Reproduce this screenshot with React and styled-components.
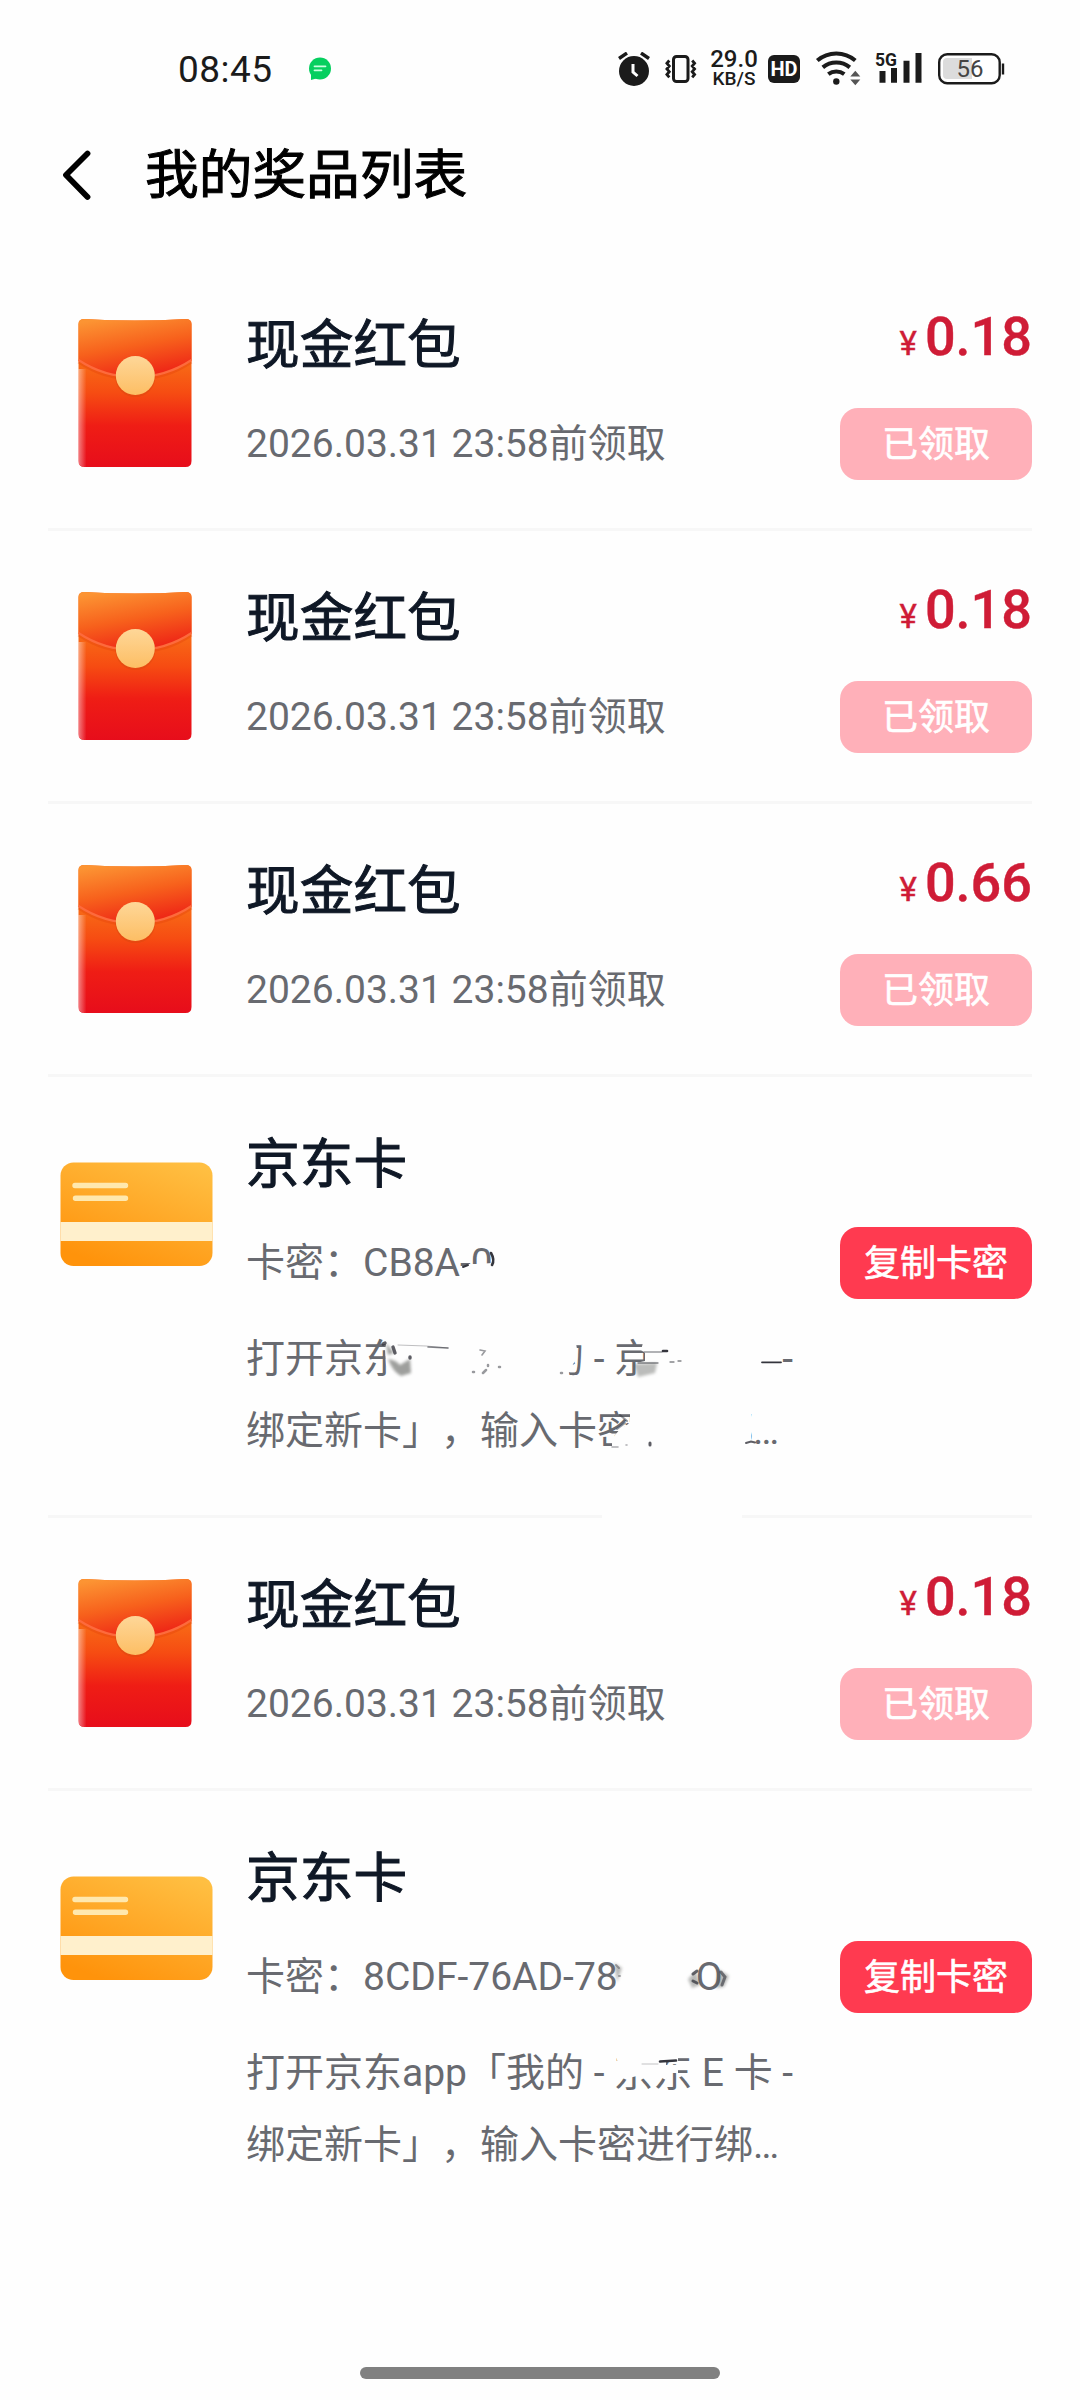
import React from 'react';
import styled, { createGlobalStyle } from 'styled-components';

const GlobalStyle = createGlobalStyle`
  * {
    box-sizing: border-box;
  }
  body {
    margin: 0;
    background: #fefefe;
    font-family: Roboto, "Noto Sans CJK SC", sans-serif;
    text-spacing-trim: space-all;
  }
`;

const Page = styled.div`
  width: 1080px;
  height: 2400px;
  display: flex;
  flex-direction: column;
  overflow: hidden;
`;

const StatusBar = styled.div`
  height: 120px;
  padding: 18px 75px 0 178px;
  display: flex;
  align-items: center;
  flex: none;
  color: #1b1b1b;
`;

const Clock = styled.div`
  font-size: 37px;
  letter-spacing: 0.5px;
  margin-right: 35px;
`;

const StatusIcons = styled.div`
  display: flex;
  align-items: center;
  gap: 14px;
  margin-left: auto;
`;

const NetSpeed = styled.div`
  width: 50px;
  margin: 0 -5px 0 -3px;
  display: flex;
  flex-direction: column;
  align-items: center;
  font-weight: 500;
`;

const NetValue = styled.div`
  font-size: 24px;
  line-height: 19px;
`;

const NetUnit = styled.div`
  font-size: 19px;
  line-height: 19px;
`;

const HdBadge = styled.div`
  width: 32px;
  height: 28px;
  border-radius: 6px;
  background: #1b1b1b;
  color: #fff;
  font-size: 20px;
  font-weight: 700;
  line-height: 29px;
  text-align: center;
`;

const Header = styled.div`
  height: 138px;
  padding: 0 60px 28px;
  display: flex;
  align-items: center;
  flex: none;
`;

const HeaderTitle = styled.div`
  margin-left: 53px;
  padding-top: 1px;
  font-size: 53.7px;
  line-height: 80px;
  color: #000;
  -webkit-text-stroke: 1px #000;
`;

const List = styled.div`
  padding: 0 48px;
`;

const Item = styled.div`
  position: relative;
  height: ${(props) => (props.$tall ? 441 : 273)}px;
  display: flex;
  border-bottom: ${(props) => (props.$last ? 0 : 3)}px solid #f7f7f7;
`;

const Picture = styled.div`
  width: 198px;
  flex: none;
  padding: ${(props) => (props.$card ? '82px 0 0 9px' : '57px 0 0 27px')};
`;

const Info = styled.div`
  flex: 1;
  padding-top: 48px;
`;

const Title = styled.div`
  font-size: 53.7px;
  line-height: 80px;
  color: #0f1826;
  -webkit-text-stroke: 1px #0f1826;
`;

const Line = styled.div`
  font-size: 39px;
  line-height: 58px;
  color: #686a70;
  margin-top: 29px;
  white-space: pre;
`;

const Tail = styled.span`
  margin-left: 78px;
`;

const Desc = styled.div`
  font-size: 39px;
  line-height: 72px;
  color: #686a70;
  margin-top: 31px;
  white-space: pre;
`;

const Side = styled.div`
  display: flex;
  flex-direction: column;
  align-items: flex-end;
  padding-top: ${(props) => (props.$card ? 150 : 47)}px;
`;

const Price = styled.div`
  height: 64px;
  margin-bottom: 39px;
  font-size: 54px;
  line-height: 64px;
  font-weight: 500;
  color: #cf1c36;
  -webkit-text-stroke: 0.4px #cf1c36;
`;

const Yuan = styled.span`
  font-size: 33px;
  font-weight: 400;
  margin-right: 8px;
`;

const Button = styled.div`
  width: 192px;
  height: 72px;
  border-radius: 18px;
  background: ${(props) => (props.$done ? '#ffb0b9' : '#ff3a50')};
  color: #fff;
  font-size: 36px;
  line-height: 74px;
  text-align: center;
  -webkit-text-stroke: 0.6px #fff;
`;

const Smudge = styled.svg`
  position: absolute;
  left: 198px;
  top: 0;
`;

const Stain = styled.g`
  filter: blur(1.5px);
`;

const HomeBar = styled.div`
  width: 360px;
  height: 12px;
  border-radius: 6px;
  background: #808080;
  margin: auto auto 21px;
`;

const MessageIcon = () => (
  <svg width="24" height="24" viewBox="0 0 24 24">
    <circle cx="12" cy="11.5" r="11" fill="#06cf5f" />
    <path d="M3 15v8l7-2z" fill="#06cf5f" />
    <path d="M6.500 9.300h11M6.500 13.300h7" stroke="#c8ffdf" strokeWidth="1.800" strokeLinecap="round" />
  </svg>
);

const AlarmIcon = () => (
  <svg width="32" height="34" viewBox="0 0 32 34">
    <circle cx="16" cy="19" r="15" fill="#1b1b1b" />
    <path d="M1 6.500l8-5.500M31 6.500L23 1" stroke="#1b1b1b" strokeWidth="3.400" />
    <path d="M15 12v8l4.500 4" stroke="#fff" strokeWidth="3" fill="none" />
  </svg>
);

const VibrateIcon = () => (
  <svg width="34" height="30" viewBox="-1 0 34 30">
    <rect x="8.500" y="2.500" width="14.500" height="25" rx="3" fill="none" stroke="#1b1b1b" strokeWidth="3" />
    <path
      d="M4.300 6.500l-2.400 2.800 2.400 2.800-2.400 2.800 2.400 2.800-2.400 2.800 2.400 2.800M27.200 6.500l2.400 2.800-2.400 2.800 2.400 2.800-2.400 2.800 2.400 2.800-2.400 2.800"
      fill="none"
      stroke="#1b1b1b"
      strokeWidth="2.800"
    />
  </svg>
);

const WifiIcon = () => (
  <svg width="47" height="38" viewBox="0 -2 47 38">
    <g fill="none" stroke="#1b1b1b" strokeWidth="4">
      <path d="M3.300 8.600a29 29 0 0 1 38 0" />
      <path d="M8.800 15.400a21 21 0 0 1 27 0" />
      <path d="M14.300 22.200a13 13 0 0 1 16 0" />
    </g>
    <circle cx="22.300" cy="29.500" r="3.200" fill="#1b1b1b" />
    <path d="M36.300 24.400l5-5.600 5 5.600zM36.300 27.600h10l-5 5.600z" fill="#555" />
  </svg>
);

const SignalIcon = () => (
  <svg width="48" height="44" viewBox="0 0 48 44">
    <text x="0" y="18.500" fontSize="19" fontWeight="700" textLength="22" lengthAdjust="spacingAndGlyphs" fill="#1b1b1b">5G</text>
    <path d="M4.500 24h6v11.700h-6zM16 21h6v14.700h-6zM28.500 13.700h6v22h-6zM40.500 6h6v29.700h-6z" fill="#1b1b1b" />
  </svg>
);

const BatteryIcon = () => (
  <svg width="68" height="32" viewBox="0 0 68 32">
    <rect x="2.200" y="1.200" width="60.500" height="29" rx="8" fill="#fff" stroke="#1b1b1b" strokeWidth="2.400" />
    <path d="M10 5h25v21H10a4 4 0 0 1-4-4V9a4 4 0 0 1 4-4z" fill="#dcdcdc" />
    <path d="M66 10.500v11" stroke="#1b1b1b" strokeWidth="2.400" />
    <text x="33" y="24.200" fontSize="24" textAnchor="middle" fill="#444">56</text>
  </svg>
);

const BackIcon = () => (
  <svg width="32" height="52" viewBox="0 0 32 52">
    <path d="M27.500 4.500L6 26l21.500 22" fill="none" stroke="#000" strokeWidth="5.800" strokeLinecap="round" strokeLinejoin="round" />
  </svg>
);

const RedPacket = () => (
  <svg width="120" height="156" viewBox="0 0 120 156">
    <defs>
      <linearGradient id="packetBody" x1="0" y1="0" x2="0" y2="1">
        <stop offset="0.300" stopColor="#f86a16" />
        <stop offset="0.500" stopColor="#f64c12" />
        <stop offset="0.720" stopColor="#ef1d15" />
        <stop offset="1" stopColor="#e70d1b" />
      </linearGradient>
      <linearGradient id="packetFlap" x1="0.200" y1="0" x2="0.550" y2="1">
        <stop offset="0" stopColor="#fc9433" />
        <stop offset="0.500" stopColor="#f7611c" />
        <stop offset="1" stopColor="#ee2516" />
      </linearGradient>
      <linearGradient id="packetSeal" x1="0" y1="0" x2="0" y2="1">
        <stop offset="0" stopColor="#fed798" />
        <stop offset="1" stopColor="#fdbe64" />
      </linearGradient>
      <linearGradient id="packetEdge" x1="0" y1="0" x2="1" y2="0">
        <stop offset="0" stopColor="#fff" stopOpacity="0.450" />
        <stop offset="1" stopColor="#fff" stopOpacity="0" />
      </linearGradient>
    </defs>
    <path d="M3.500 9q0-5 6-5 50.500 3 101 0 6 0 6 5v137q0 6-6 6h-101q-6 0-6-6z" fill="url(#packetBody)" />
    <path d="M3.500 47q25 17 56.500 17t56.500-17" fill="none" stroke="#e2400c" strokeWidth="3" opacity="0.350" />
    <path d="M3.500 45V9q0-5 6-5 50.500 3 101 0 6 0 6 5v36Q91 62 60 62T3.500 45z" fill="url(#packetFlap)" />
    <path d="M3.500 45Q29 62 60 62t56.500-17" fill="none" stroke="#fd6a3c" strokeWidth="2.200" />
    <path d="M3.500 54h8v98q-8 0-8-6z" fill="url(#packetEdge)" />
    <circle cx="60.300" cy="62" r="20" fill="#d9480f" opacity="0.500" />
    <circle cx="60.300" cy="60.500" r="19.500" fill="url(#packetSeal)" />
  </svg>
);

const GiftCard = () => (
  <svg width="160" height="112" viewBox="0 0 160 112">
    <defs>
      <linearGradient id="cardBody" x1="0.850" y1="0" x2="0.300" y2="1">
        <stop offset="0" stopColor="#ffbf42" />
        <stop offset="0.500" stopColor="#ffa928" />
        <stop offset="1" stopColor="#ff930b" />
      </linearGradient>
    </defs>
    <rect x="3.500" y="3.500" width="152" height="103.500" rx="13" fill="url(#cardBody)" />
    <rect x="3.500" y="63" width="152" height="19" fill="#fff0cc" />
    <path d="M18 26.500h50.500M18.500 39.300h50" stroke="#ffe8ae" strokeWidth="5.400" strokeLinecap="round" />
  </svg>
);

// rubbed-out areas over the first card's secret and description
const SmudgeFirst = () => (
  <Smudge width="620" height="445" viewBox="0 0 620 445">
    <g fill="#fefefe">
      <path d="M221 187h11l14-1 4 2v22h-29z" />
      <path d="M143 255h185l3 17-2 12-6 10-2 16H156l-16-22-1-16z" />
      <path d="M400 255h135v55H394l-4-24 9-2v-8l-4-3z" />
      <path d="M384 328h121v50H366v-16l8-10 10-6z" />
      <path d="M356 436h140v9H356z" />
    </g>
    <Stain fill="#50524e" opacity="0.550">
      <path d="M142 282q8 1 12 6l10-6 1 14-10 3q-8-4-13-17z" />
      <path d="M388 287l23-1-2 10-17 4z" opacity="0.700" />
      <path d="M140 266l8 10-6 2z" />
    </Stain>
    <g fill="none" stroke="#34353d" strokeLinecap="round">
      <path d="M245 176q4 7 1 12" strokeWidth="2.600" />
      <path d="M217 190l5-2" strokeWidth="2" />
      <path d="M137 267l2-1M147 270l2 6M164 280v1" strokeWidth="3.400" opacity="0.800" />
      <path d="M152 268l28 1 22 2" strokeWidth="0.800" opacity="0.400" />
      <path d="M182 270l10 0.500 10 0.500" strokeWidth="1.600" opacity="0.600" />
      <path d="M234 273l5 1-3 4" strokeWidth="1.600" opacity="0.500" />
      <path d="M227 295h1M242 288v1M253 290h1M237 296l3-3M315 296h1" strokeWidth="2.500" opacity="0.500" />
      <path d="M398 275h18" strokeWidth="1.500" opacity="0.500" />
      <path d="M417 274h4" strokeWidth="2.600" />
      <path d="M392 286h20M424 285h4M432 284h3" strokeWidth="1.300" opacity="0.600" />
      <path d="M516 285.300h19" strokeWidth="1.800" />
      <path d="M374 338l7 6M371 352l8-6" strokeWidth="2" opacity="0.500" />
      <path d="M404 366v2" strokeWidth="3" opacity="0.800" />
      <path d="M500 366l5-1.500 4 1" strokeWidth="2" opacity="0.800" />
      <path d="M366 370h6M380 368h1" strokeWidth="1.600" opacity="0.400" />
    </g>
  </Smudge>
);

// the same for the last card
const SmudgeLast = () => (
  <Smudge width="620" height="441" viewBox="0 0 620 441">
    <g fill="#fefefe">
      <path d="M368 255h64v15h-12v4h12v8h-9l-3 7-4-2-8 4-3-6h-14l-8 2h-8z" />
    </g>
    <Stain fill="#50524e" opacity="0.400">
      <path d="M368 172l8 5-5 14z" />
      <path d="M442 188l8-8 4 14-8 3z" />
      <path d="M472 178l11 7-5 11-8 1z" />
    </Stain>
    <g fill="none" stroke="#34353d" strokeLinecap="round">
      <path d="M414 270.500l16-1" strokeWidth="2.600" />
      <path d="M396 273h16" strokeWidth="1" opacity="0.300" />
      <path d="M370 174l3 3M373 185h1" strokeWidth="2" opacity="0.400" />
      <path d="M451 180l-4 3M447 190l4 2" strokeWidth="3" opacity="0.750" />
      <path d="M475 181l4 5-3 8" strokeWidth="3" opacity="0.600" />
    </g>
  </Smudge>
);

const prizes = [
  { title: '现金红包', price: '0.18' },
  { title: '现金红包', price: '0.18' },
  { title: '现金红包', price: '0.66' },
  { title: '京东卡', card: true, secret: 'CB8A-0', smudge: <SmudgeFirst /> },
  { title: '现金红包', price: '0.18' },
  { title: '京东卡', card: true, secret: '8CDF-76AD-78', tail: 'O', smudge: <SmudgeLast /> },
];

const Prize = ({ prize, last }) => (
  <Item $tall={prize.card} $last={last}>
    <Picture $card={prize.card}>{prize.card ? <GiftCard /> : <RedPacket />}</Picture>
    <Info>
      <Title>{prize.title}</Title>
      <Line>
        {prize.card ? `卡密：${prize.secret}` : '2026.03.31 23:58前领取'}
        {prize.tail ? <Tail>{prize.tail}</Tail> : null}
      </Line>
      {prize.card ? (
        <Desc>
          {'打开京东app「我的 - 京东 E 卡 -\n绑定新卡」，输入卡密进行绑…'}
        </Desc>
      ) : null}
    </Info>
    <Side $card={prize.card}>
      {prize.card ? null : (
        <Price>
          <Yuan>¥</Yuan>
          {prize.price}
        </Price>
      )}
      <Button $done={!prize.card}>{prize.card ? '复制卡密' : '已领取'}</Button>
    </Side>
    {prize.smudge}
  </Item>
);

export default function App() {
  return (
    <Page>
      <GlobalStyle />
      <StatusBar>
        <Clock>08:45</Clock>
        <MessageIcon />
        <StatusIcons>
          <AlarmIcon />
          <VibrateIcon />
          <NetSpeed>
            <NetValue>29.0</NetValue>
            <NetUnit>KB/S</NetUnit>
          </NetSpeed>
          <HdBadge>HD</HdBadge>
          <WifiIcon />
          <SignalIcon />
          <BatteryIcon />
        </StatusIcons>
      </StatusBar>
      <Header>
        <BackIcon />
        <HeaderTitle>我的奖品列表</HeaderTitle>
      </Header>
      <List>
        {prizes.map((prize, i) => (
          <Prize key={i} prize={prize} last={i === prizes.length - 1} />
        ))}
      </List>
      <HomeBar />
    </Page>
  );
}
